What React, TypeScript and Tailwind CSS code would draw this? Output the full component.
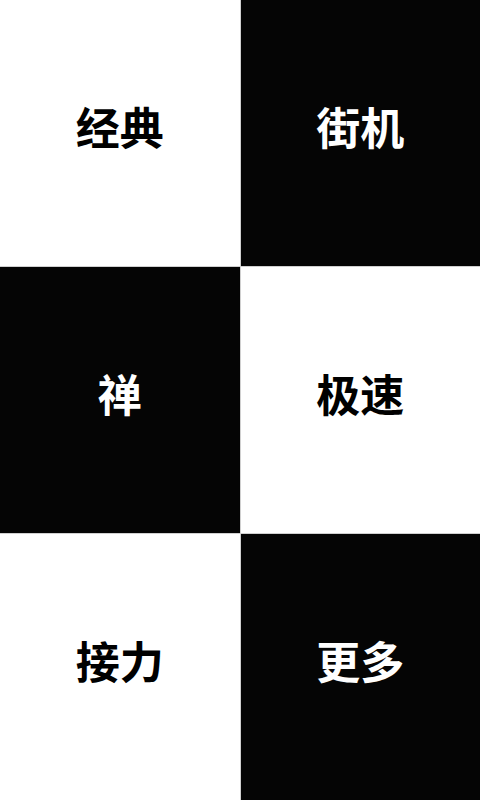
const tiles = [
  { label: '经典', dark: false },
  { label: '街机', dark: true },
  { label: '禅', dark: true },
  { label: '极速', dark: false },
  { label: '接力', dark: false },
  { label: '更多', dark: true },
]

export default function App() {
  return (
    <div className="grid h-[800px] w-[480px] grid-cols-2 grid-rows-3 bg-[#d0d0d0] gap-px [font-family:'Noto_Sans_CJK_SC',sans-serif]">
      {tiles.map((t) => (
        <div
          key={t.label}
          className={`flex items-center justify-center pb-[14px] text-[44px] font-bold ${
            t.dark ? 'bg-[#050505] text-white' : 'bg-white text-black'
          }`}
        >
          {t.label}
        </div>
      ))}
    </div>
  )
}
